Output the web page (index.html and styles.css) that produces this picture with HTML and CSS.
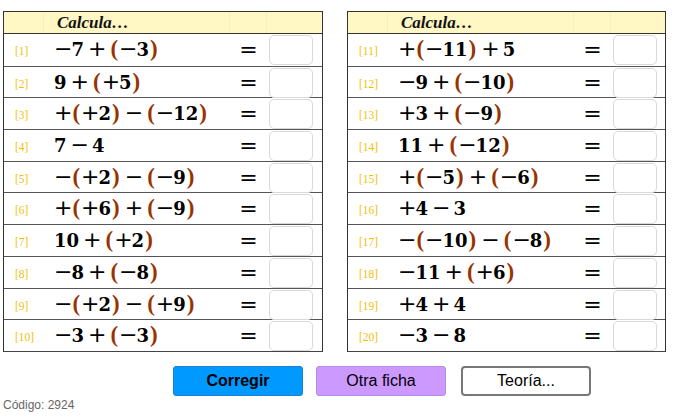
FILE: index.html
```html
<!DOCTYPE html>
<html lang="es">
<head>
<meta charset="utf-8">
<link rel="stylesheet" href="styles.css">
</head>
<body>
<div class="page">
  <div class="tables">
    <div class="sheet">
      <div class="head"><div class="h-num"></div><div class="h-expr">Calcula…</div><div class="h-eq"></div><div class="h-box"></div></div>
      <div class="row"><div class="num">[1]</div><div class="expr"><span class="op">−</span>7<span class="op bin">+</span><span class="p">(</span><span class="op">−</span>3<span class="p">)</span></div><div class="eq">=</div><div class="cell"><div class="box"></div></div></div>
      <div class="row"><div class="num">[2]</div><div class="expr">9<span class="op bin">+</span><span class="p">(</span><span class="op">+</span>5<span class="p">)</span></div><div class="eq">=</div><div class="cell"><div class="box"></div></div></div>
      <div class="row"><div class="num">[3]</div><div class="expr"><span class="op">+</span><span class="p">(</span><span class="op">+</span>2<span class="p">)</span><span class="op bin">−</span><span class="p">(</span><span class="op">−</span>12<span class="p">)</span></div><div class="eq">=</div><div class="cell"><div class="box"></div></div></div>
      <div class="row"><div class="num">[4]</div><div class="expr">7<span class="op bin">−</span>4</div><div class="eq">=</div><div class="cell"><div class="box"></div></div></div>
      <div class="row"><div class="num">[5]</div><div class="expr"><span class="op">−</span><span class="p">(</span><span class="op">+</span>2<span class="p">)</span><span class="op bin">−</span><span class="p">(</span><span class="op">−</span>9<span class="p">)</span></div><div class="eq">=</div><div class="cell"><div class="box"></div></div></div>
      <div class="row"><div class="num">[6]</div><div class="expr"><span class="op">+</span><span class="p">(</span><span class="op">+</span>6<span class="p">)</span><span class="op bin">+</span><span class="p">(</span><span class="op">−</span>9<span class="p">)</span></div><div class="eq">=</div><div class="cell"><div class="box"></div></div></div>
      <div class="row"><div class="num">[7]</div><div class="expr">10<span class="op bin">+</span><span class="p">(</span><span class="op">+</span>2<span class="p">)</span></div><div class="eq">=</div><div class="cell"><div class="box"></div></div></div>
      <div class="row"><div class="num">[8]</div><div class="expr"><span class="op">−</span>8<span class="op bin">+</span><span class="p">(</span><span class="op">−</span>8<span class="p">)</span></div><div class="eq">=</div><div class="cell"><div class="box"></div></div></div>
      <div class="row"><div class="num">[9]</div><div class="expr"><span class="op">−</span><span class="p">(</span><span class="op">+</span>2<span class="p">)</span><span class="op bin">−</span><span class="p">(</span><span class="op">+</span>9<span class="p">)</span></div><div class="eq">=</div><div class="cell"><div class="box"></div></div></div>
      <div class="row"><div class="num">[10]</div><div class="expr"><span class="op">−</span>3<span class="op bin">+</span><span class="p">(</span><span class="op">−</span>3<span class="p">)</span></div><div class="eq">=</div><div class="cell"><div class="box"></div></div></div>
    </div>
    <div class="sheet">
      <div class="head"><div class="h-num"></div><div class="h-expr">Calcula…</div><div class="h-eq"></div><div class="h-box"></div></div>
      <div class="row"><div class="num">[11]</div><div class="expr"><span class="op">+</span><span class="p">(</span><span class="op">−</span>11<span class="p">)</span><span class="op bin">+</span>5</div><div class="eq">=</div><div class="cell"><div class="box"></div></div></div>
      <div class="row"><div class="num">[12]</div><div class="expr"><span class="op">−</span>9<span class="op bin">+</span><span class="p">(</span><span class="op">−</span>10<span class="p">)</span></div><div class="eq">=</div><div class="cell"><div class="box"></div></div></div>
      <div class="row"><div class="num">[13]</div><div class="expr"><span class="op">+</span>3<span class="op bin">+</span><span class="p">(</span><span class="op">−</span>9<span class="p">)</span></div><div class="eq">=</div><div class="cell"><div class="box"></div></div></div>
      <div class="row"><div class="num">[14]</div><div class="expr">11<span class="op bin">+</span><span class="p">(</span><span class="op">−</span>12<span class="p">)</span></div><div class="eq">=</div><div class="cell"><div class="box"></div></div></div>
      <div class="row"><div class="num">[15]</div><div class="expr"><span class="op">+</span><span class="p">(</span><span class="op">−</span>5<span class="p">)</span><span class="op bin">+</span><span class="p">(</span><span class="op">−</span>6<span class="p">)</span></div><div class="eq">=</div><div class="cell"><div class="box"></div></div></div>
      <div class="row"><div class="num">[16]</div><div class="expr"><span class="op">+</span>4<span class="op bin">−</span>3</div><div class="eq">=</div><div class="cell"><div class="box"></div></div></div>
      <div class="row"><div class="num">[17]</div><div class="expr"><span class="op">−</span><span class="p">(</span><span class="op">−</span>10<span class="p">)</span><span class="op bin">−</span><span class="p">(</span><span class="op">−</span>8<span class="p">)</span></div><div class="eq">=</div><div class="cell"><div class="box"></div></div></div>
      <div class="row"><div class="num">[18]</div><div class="expr"><span class="op">−</span>11<span class="op bin">+</span><span class="p">(</span><span class="op">+</span>6<span class="p">)</span></div><div class="eq">=</div><div class="cell"><div class="box"></div></div></div>
      <div class="row"><div class="num">[19]</div><div class="expr"><span class="op">+</span>4<span class="op bin">+</span>4</div><div class="eq">=</div><div class="cell"><div class="box"></div></div></div>
      <div class="row"><div class="num">[20]</div><div class="expr"><span class="op">−</span>3<span class="op bin">−</span>8</div><div class="eq">=</div><div class="cell"><div class="box"></div></div></div>
    </div>
  </div>
  <div class="buttons">
    <div class="btn btn-blue">Corregir</div>
    <div class="btn btn-purple">Otra ficha</div>
    <div class="btn btn-white">Teoría...</div>
  </div>
  <div class="code">Código: 2924</div>
</div>
</body>
</html>
```
FILE: styles.css
```css
html, body {
  margin: 0;
  padding: 0;
  background: #ffffff;
}
.page {
  width: 675px;
  height: 417px;
  padding: 11px 0 0 3px;
  box-sizing: border-box;
  font-family: "Liberation Sans", Arial, sans-serif;
}
.tables {
  display: flex;
  gap: 24px;
}
.sheet {
  width: 320px;
  border: 1px solid #333;
  border-bottom: 1px solid #444;
  box-sizing: border-box;
  background: #fff;
}
.sheet + .sheet { width: 319px; }
.head {
  display: grid;
  grid-template-columns: 40px 186px 37px 1fr;
  height: 21px;
  background: #fff7c4;
  border-bottom: 1px solid #333;
}
.head > div {
  border-right: 1px solid #f6eebb;
}
.head > div:last-child { border-right: none; }
.h-expr {
  font-family: "Liberation Serif", "Times New Roman", serif;
  font-style: italic;
  font-weight: bold;
  font-size: 17px;
  line-height: 21px;
  padding-left: 13px;
  color: #111;
}
.row {
  display: grid;
  grid-template-columns: 40px 186px 37px 1fr;
  height: 30.7px;
  align-items: center;
  border-top: 1px solid #555;
}
.head + .row { border-top: none; height: 31.7px; }
.num {
  font-family: "Liberation Serif", "Times New Roman", serif;
  font-size: 11.5px;
  color: #f2bf00;
  padding-left: 11px;
  padding-top: 3px;
}
.expr {
  font-family: "DejaVu Serif", "Liberation Serif", serif;
  font-weight: bold;
  font-size: 18px;
  line-height: 24px;
  color: #000;
  padding-left: 10px;
  white-space: nowrap;
}
.op {
  font-family: "DejaVu Sans", sans-serif;
  font-weight: normal;
  font-size: 22px;
  margin-right: -1px;
}
.op.bin {
  margin: 0 3px 0 4px;
}
.p {
  font-family: "Liberation Serif", "Times New Roman", serif;
  color: #993300;
  font-weight: bold;
  font-size: 23px;
  margin: 0 1px;
}
.eq {
  font-family: "DejaVu Sans", sans-serif;
  font-size: 22px;
  color: #000;
  text-align: center;
}
.cell {
  height: 100%;
  display: flex;
  align-items: flex-start;
}
.box {
  width: 44px;
  height: 30px;
  margin: 1px 0 0 2px;
  box-sizing: border-box;
  border: 1px solid #d9d9d9;
  border-radius: 5px;
  background: #fff;
  position: relative;
  z-index: 1;
}
.buttons {
  display: flex;
  gap: 13px;
  margin: 14px 0 0 170px;
}
.btn {
  width: 130px;
  height: 30px;
  box-sizing: border-box;
  border-radius: 3px;
  font-size: 16px;
  line-height: 28px;
  text-align: center;
  color: #000;
}
.btn-blue {
  background: #0099ff;
  border: 1px solid #1a7fd0;
  font-weight: bold;
}
.btn-purple {
  background: #cc99ff;
  border: 1px solid #b88ae6;
}
.btn-white {
  background: #fff;
  border: 2px solid #777;
  border-radius: 4px;
  line-height: 26px;
  margin-left: 2px;
}
.code {
  font-size: 12px;
  color: #666;
  margin-top: 2px;
}
```
